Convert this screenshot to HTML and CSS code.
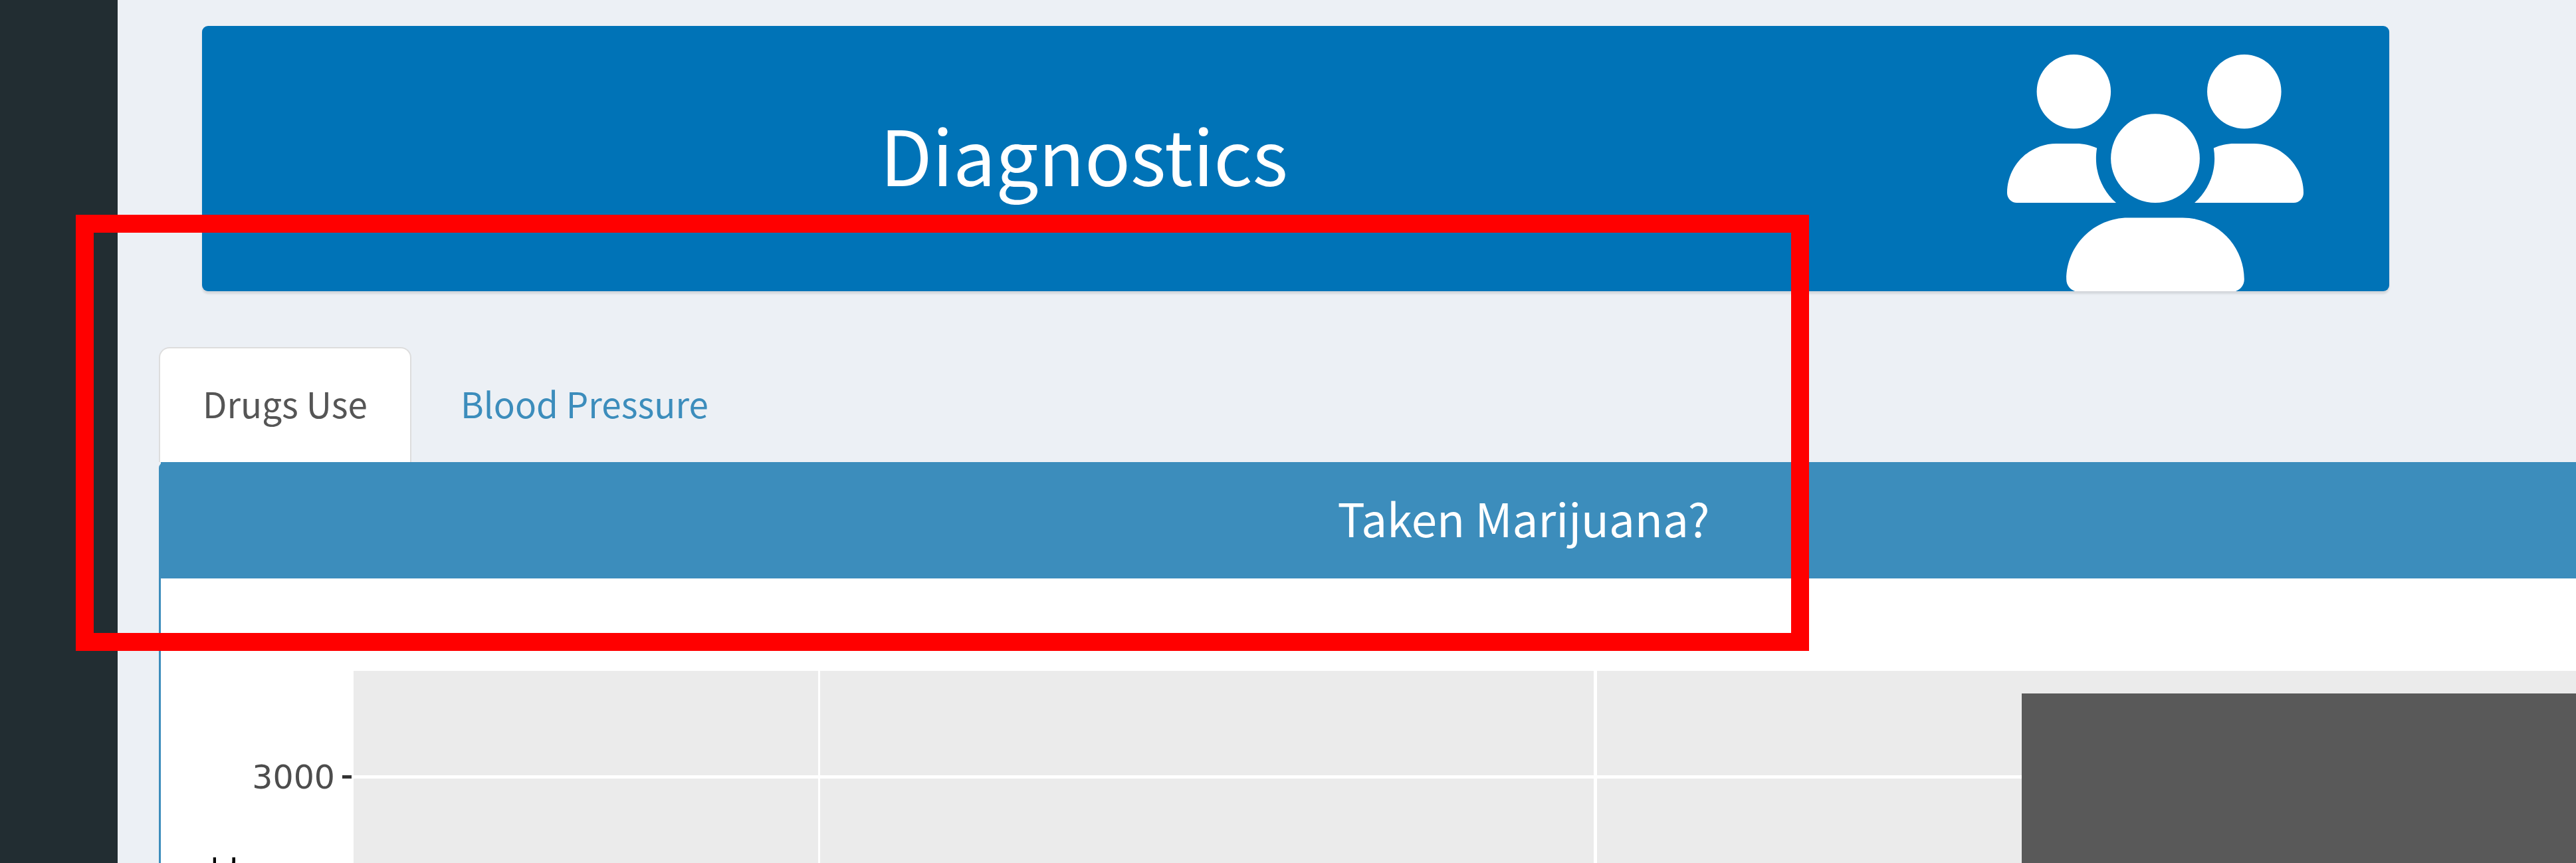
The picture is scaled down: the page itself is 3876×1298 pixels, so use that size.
FILE: index.html
```html
<!DOCTYPE html>
<html lang="en">
<head>
<meta charset="utf-8">
<title>Diagnostics</title>
<link rel="stylesheet" href="styles.css">
</head>
<body>
<div class="app">
  <aside class="sidebar" aria-label="Sidebar"></aside>
  <main class="content">
    <header class="banner">
      <h1 class="banner-title">Diagnostics</h1>
      <div class="banner-icon">
        <svg class="users" viewBox="0 0 640 512" aria-hidden="true"><path fill="currentColor" d="M144 0a80 80 0 1 1 0 160A80 80 0 1 1 144 0zM512 0a80 80 0 1 1 0 160A80 80 0 1 1 512 0zM0 298.7C0 239.8 47.8 192 106.7 192h42.7c15.9 0 31 3.5 44.6 9.7c-1.3 7.2-1.9 14.7-1.9 22.3c0 38.2 16.8 72.5 43.3 96c-.2 0-.4 0-.7 0H21.3C9.6 320 0 310.4 0 298.7zM405.3 320c-.2 0-.4 0-.7 0c26.6-23.5 43.3-57.8 43.3-96c0-7.6-.7-15-1.9-22.3c13.6-6.3 28.7-9.7 44.6-9.7h42.7C592.2 192 640 239.8 640 298.7c0 11.8-9.6 21.3-21.3 21.3H405.3zM224 224a96 96 0 1 1 192 0 96 96 0 1 1 -192 0zM128 485.3C128 411.7 187.7 352 261.3 352H378.7C452.3 352 512 411.7 512 485.3c0 14.7-11.9 26.7-26.7 26.7H154.7c-14.7 0-26.7-11.9-26.7-26.7z"/></svg>
      </div>
    </header>
    <nav class="tabs">
      <a class="tab tab-active" href="#drugs" aria-current="page">Drugs Use</a>
      <a class="tab" href="#pressure">Blood Pressure</a>
    </nav>
    <section class="box" id="drugs">
      <h2 class="box-title">Taken Marijuana?</h2>
      <svg class="chart" role="img" aria-label="Bar chart of counts">
        <rect class="panel" x="290" y="56" width="3800" height="400"/>
        <rect class="grid-line" x="290" y="213" width="3800" height="5"/>
        <rect class="grid-line" x="989" y="56" width="3" height="400"/>
        <rect class="grid-line" x="2156" y="56" width="5" height="400"/>
        <rect class="tick" x="273" y="213" width="14" height="5"/>
        <rect class="bar" x="2800" y="90" width="1290" height="366"/>
        <text class="tick-label" x="262" y="233" text-anchor="end">3000</text>
        <text class="axis-label" transform="translate(112 335) rotate(-90)" text-anchor="end">count</text>
      </svg>
    </section>
  </main>
  <div class="highlight"></div>
</div>
</body>
</html>
```
FILE: styles.css
```css
* { box-sizing: border-box; }

body {
  margin: 0;
  background: #ecf0f5;
  font-family: "Noto Sans CJK SC", "Open Sans", sans-serif;
  overflow: hidden;
}

.app {
  position: relative;
  display: flex;
  min-height: 100vh;
}

.sidebar {
  flex: 0 0 177px;
  background: #222d32;
}

.content {
  flex: 1;
  min-width: 0;
  height: 100vh;
  padding: 39px 0 0 62px;
  overflow: hidden;
}

.banner {
  display: flex;
  height: 399px;
  margin: 0 281px 84px 65px;
  border-radius: 9px;
  background: #0073b7;
  color: #fff;
  box-shadow: 0 4px 3px rgba(0, 0, 0, 0.1);
  overflow: hidden;
}

.banner-title {
  flex: 1;
  margin: 0;
  padding-top: 112px;
  font-size: 114px;
  font-weight: 400;
  line-height: 160px;
  text-align: center;
}

.banner-icon {
  flex: 0 0 637px;
  padding: 43px 0 0 62px;
}

.users {
  display: block;
  width: 446px;
  height: 357px;
}

.tabs {
  display: flex;
  gap: 6px;
  height: 173px;
}

.tab {
  padding: 0 66px;
  border: 2px solid transparent;
  border-bottom: 0;
  border-radius: 16px 16px 0 0;
  color: #3c8dbc;
  font-size: 53px;
  line-height: 164px;
  text-decoration: none;
}

.tab-active {
  padding: 0 64px;
  border-color: #ddd;
  background: #fff;
  color: #555;
}

.box {
  width: calc(100% + 467px);
  border-left: 3px solid #3c8dbc;
  border-radius: 9px 0 0 0;
  background: #fff;
}

.box-title {
  margin: 0;
  padding-bottom: 9px;
  background: #3c8dbc;
  color: #fff;
  font-size: 69px;
  font-weight: 400;
  line-height: 166px;
  text-align: center;
}

.chart {
  display: block;
  width: 100%;
  height: 456px;
  margin-top: 83px;
  font-family: "DejaVu Sans", sans-serif;
}

.panel { fill: #ebebeb; }
.grid-line { fill: #fff; }
.tick { fill: #333; }
.bar { fill: #595959; }
.tick-label { fill: #4d4d4d; font-size: 49px; }
.axis-label { fill: #000; font-size: 61px; }

.highlight {
  position: absolute;
  top: 323px;
  left: 114px;
  width: 2608px;
  height: 656px;
  border: 27px solid #f00;
  pointer-events: none;
}
```
